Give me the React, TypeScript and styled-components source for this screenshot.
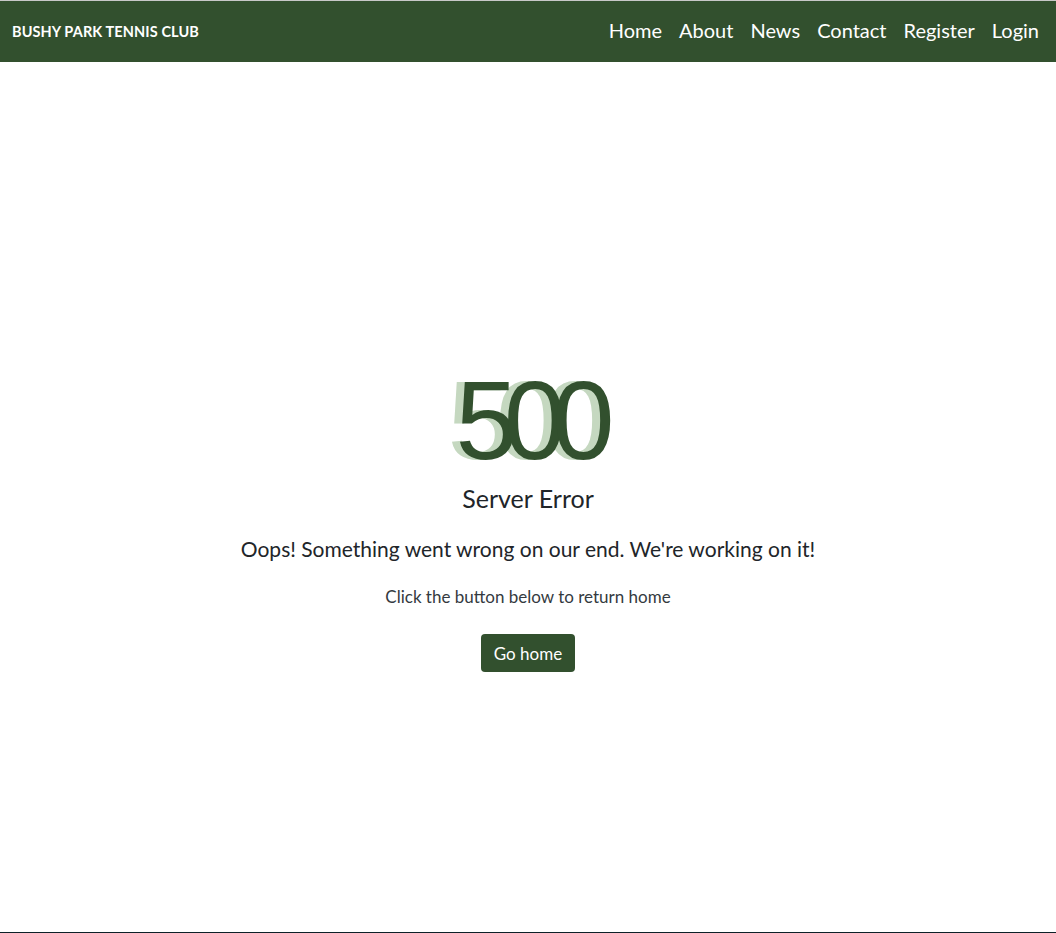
import React from "react";
import styled, { createGlobalStyle } from "styled-components";

const Global = createGlobalStyle`
  html, body { margin: 0; padding: 0; }
  body {
    font-family: "Lato", "Open Sans", sans-serif;
    color: #212529;
    background: #ffffff;
  }
  * { box-sizing: border-box; }
`;

const Page = styled.div`
  display: flex;
  flex-direction: column;
  min-height: 100vh;
`;

const NavBar = styled.nav`
  height: 62px;
  border-top: 1px solid #c8c8c8;
  background: #32502e;
  display: flex;
  align-items: center;
  justify-content: space-between;
  padding: 0 17px 0 12px;
`;

const Brand = styled.a`
  color: #ffffff;
  font-family: "Lato", sans-serif;
  font-weight: 700;
  font-size: 14.5px;
  text-decoration: none;
  letter-spacing: 0.1px;
`;

const NavList = styled.ul`
  display: flex;
  list-style: none;
  margin: 0;
  padding: 0 0 3px;
  gap: 17px;
`;

const NavLink = styled.a`
  color: #ffffff;
  font-size: 20px;
  text-decoration: none;
`;

const Main = styled.main`
  height: 870px;
  display: flex;
  flex-direction: column;
  align-items: center;
  padding-top: 303px;
`;

const Code = styled.div`
  font-family: "Liberation Sans", Arial, sans-serif;
  font-size: 112px;
  line-height: 112px;
  letter-spacing: -14px;
  color: #32502e;
  text-shadow: -8px 0 0 #c5d8c0;
`;

const Title = styled.h2`
  margin: 0;
  margin-top: 6px;
  font-size: 25px;
  font-weight: 400;
`;

const Lead = styled.p`
  margin: 23px 0 0;
  font-size: 21px;
`;

const Sub = styled.p`
  margin: 25px 0 0;
  font-size: 17px;
  color: #343a40;
`;

const Button = styled.a`
  margin-top: 27px;
  display: inline-flex;
  align-items: center;
  justify-content: center;
  height: 38px;
  padding: 0 13px;
  background: #32502e;
  color: #ffffff;
  border-radius: 4px;
  font-size: 17px;
  text-decoration: none;
`;

const Footer = styled.footer`
  height: 200px;
  background: #0d2128;
`;

export default function App() {
  const links = ["Home", "About", "News", "Contact", "Register", "Login"];
  return (
    <Page>
      <Global />
      <NavBar>
        <Brand href="#">BUSHY PARK TENNIS CLUB</Brand>
        <NavList>
          {links.map((l) => (
            <li key={l}>
              <NavLink href="#">{l}</NavLink>
            </li>
          ))}
        </NavList>
      </NavBar>
      <Main>
        <Code>500</Code>
        <Title>Server Error</Title>
        <Lead>Oops! Something went wrong on our end. We're working on it!</Lead>
        <Sub>Click the button below to return home</Sub>
        <Button href="#">Go home</Button>
      </Main>
      <Footer />
    </Page>
  );
}
